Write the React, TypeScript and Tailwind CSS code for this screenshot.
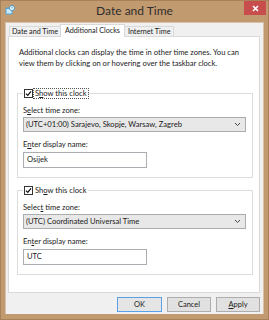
import React from "react";

function Check() {
  return (
    <span className="w-[9px] h-[9px] border border-[#333] bg-white flex items-center justify-center shrink-0">
      <svg width="7" height="7" viewBox="0 0 7 7">
        <path d="M1 3.6 L2.8 5.4 L6 1.4" stroke="#111" strokeWidth="1.3" fill="none" />
      </svg>
    </span>
  );
}

function Chevron() {
  return (
    <svg width="7" height="5" viewBox="0 0 7 5">
      <path d="M1 1 L3.5 3.5 L6 1" stroke="#444" strokeWidth="1" fill="none" />
    </svg>
  );
}

function Group({
  focus,
  zone,
  name,
  sel,
  ent,
  show,
}: {
  focus?: boolean;
  zone: string;
  name: string;
  sel: React.ReactNode;
  ent: React.ReactNode;
  show: React.ReactNode;
}) {
  return (
    <fieldset className="border border-[#dcdcdc] ml-[8px] w-[236px] px-[5px] pb-[9px]">
      <legend className="flex items-center gap-[1px] pl-[1px] h-[11px]">
        <Check />
        <span
          className={
            "px-[1px] leading-[9px] whitespace-nowrap " +
            (focus ? "outline outline-1 outline-dotted outline-[#555]" : "")
          }
        >
          {show}
        </span>
      </legend>
      <div className="mt-[6px] leading-[11px] whitespace-nowrap">{sel}</div>
      <div className="mt-[1px] h-[15px] w-[223px] border border-[#acacac] bg-[#e8e8e8] flex items-center justify-between pl-[2px] pr-[4px]">
        <span className="whitespace-nowrap">{zone}</span>
        <Chevron />
      </div>
      <div className="mt-[7px] leading-[11px] whitespace-nowrap">{ent}</div>
      <div className="mt-[2px] h-[16px] w-[124px] border border-[#abadb3] bg-white flex items-center pl-[3px]">
        {name}
      </div>
    </fieldset>
  );
}

export default function App() {
  return (
    <div className="w-[269px] h-[320px] bg-[#c29a6f] border border-[#a98159] flex flex-col text-[7.6px] text-[#1a1a1a] font-['Lato',sans-serif]">
      <div className="h-[21px] grid grid-cols-[1fr_auto_1fr] items-start">
        <div className="pl-[4px] pt-[4px]">
          <svg width="10" height="10" viewBox="0 0 10 10">
            <rect x="0.5" y="2.5" width="7" height="7" rx="1" fill="#4fa7d9" />
            <rect x="1.5" y="4" width="5" height="4.5" fill="#cfeaf8" />
            <circle cx="7" cy="3" r="2.6" fill="#e8f4fb" stroke="#3e8ec4" strokeWidth="0.8" />
            <path d="M7 1.6 V3 H8" stroke="#3e8ec4" strokeWidth="0.6" fill="none" />
          </svg>
        </div>
        <div className="pt-[3px] text-[12px] leading-[14px] text-[#2e2e2e]">Date and Time</div>
        <div className="flex justify-end pr-[2px]">
          <div className="w-[22px] h-[14px] bg-[#c84d4d] flex items-center justify-center">
            <svg width="7" height="7" viewBox="0 0 7 7">
              <path d="M1 1 L6 6 M6 1 L1 6" stroke="#fff" strokeWidth="1.6" />
            </svg>
          </div>
        </div>
      </div>
      <div className="mx-[4px] mb-[5px] flex-1 bg-[#f0f0f0] border-t border-x border-[#d8c2aa] flex flex-col pl-[2px] pr-[3px]">
        <div className="flex items-end h-[13px] pl-[1px] relative z-10 text-[7.2px] whitespace-nowrap">
          <div className="h-[10px] px-[2px] border border-b-0 border-r-0 border-[#d9d9d9] bg-[#f0f0f0] flex items-center justify-center leading-none">
            Date and Time
          </div>
          <div className="h-[13px] px-[4px] -mb-[1px] border border-b-0 border-[#d9d9d9] bg-white flex items-start pt-[1px] justify-center leading-[10px]">
            Additional Clocks
          </div>
          <div className="h-[10px] px-[3px] border border-b-0 border-l-0 border-[#d9d9d9] bg-[#f0f0f0] flex items-center justify-center leading-none">
            Internet Time
          </div>
        </div>
        <div className="h-[257px] border border-[#d9d9d9] bg-white flex flex-col">
          <p className="pl-[10px] pt-[10px] leading-[11px] whitespace-nowrap">
            Additional clocks can display the time in other time zones. You can
            <br />
            view them by clicking on or hovering over the taskbar clock.
          </p>
          <div className="mt-[19px] flex flex-col gap-[7px]">
            <Group
              focus
              show={<>S<u>h</u>ow this clock</>}
              sel={<>S<u>e</u>lect time zone:</>}
              ent={<>E<u>n</u>ter display name:</>}
              zone="(UTC+01:00) Sarajevo, Skopje, Warsaw, Zagreb"
              name="Osijek"
            />
            <Group
              show={<>Sh<u>o</u>w this clock</>}
              sel={<>Selec<u>t</u> time zone:</>}
              ent={<>En<u>t</u>er display name:</>}
              zone="(UTC) Coordinated Universal Time"
              name="UTC"
            />
          </div>
        </div>
        <div className="flex justify-end gap-[5px] mt-[4px]">
          <button className="w-[45px] h-[15px] border border-[#5aa0e6] bg-[#e5e5e5] text-[7.5px] leading-none">
            OK
          </button>
          <button className="w-[44px] h-[15px] border border-[#adadad] bg-[#e1e1e1] text-[7.5px] leading-none">
            Cancel
          </button>
          <button className="w-[44px] h-[15px] border border-[#adadad] bg-[#e1e1e1] text-[7.5px] leading-none">
            <u>A</u>pply
          </button>
        </div>
      </div>
    </div>
  );
}
